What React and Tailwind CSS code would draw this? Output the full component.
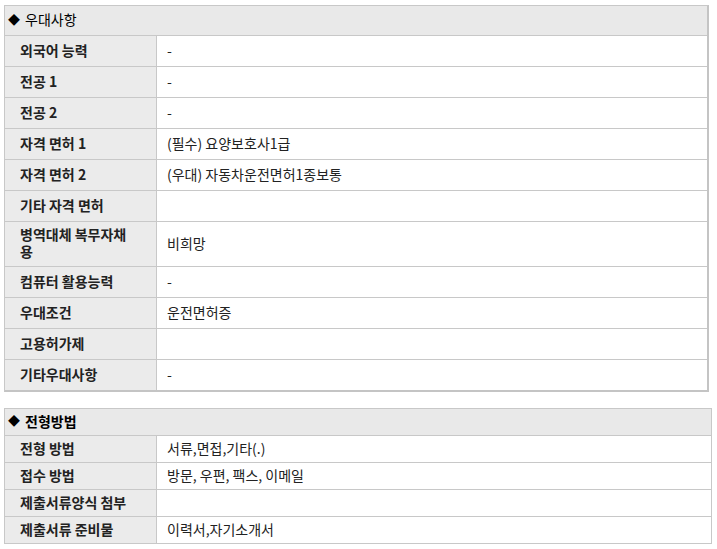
import React from 'react';

// --- 데이터 ---
const preferRows = [
  { label: '외국어 능력', value: '-' },
  { label: '전공 1', value: '-' },
  { label: '전공 2', value: '-' },
  { label: '자격 면허 1', value: '(필수) 요양보호사1급' },
  { label: '자격 면허 2', value: '(우대) 자동차운전면허1종보통' },
  { label: '기타 자격 면허', value: '' },
  { label: '병역대체 복무자채용', value: '비희망', tall: true },
  { label: '컴퓨터 활용능력', value: '-' },
  { label: '우대조건', value: '운전면허증' },
  { label: '고용허가제', value: '' },
  { label: '기타우대사항', value: '-' },
];

const selectRows = [
  { label: '전형 방법', value: '서류,면접,기타(.)' },
  { label: '접수 방법', value: '방문, 우편, 팩스, 이메일' },
  { label: '제출서류양식 첨부', value: '' },
  { label: '제출서류 준비물', value: '이력서,자기소개서' },
];

function Row({ label, value, tall, h }) {
  return (
    <div className={`flex border-t border-[#c8c8c8] ${tall ? 'h-[45px]' : h}`}>
      <div className="w-[152px] shrink-0 bg-[#ebebeb] border-r border-[#c8c8c8] pl-[15px] pr-[24px] pb-[2px] flex items-center font-bold text-[#222] leading-[17px]">
        {label}
      </div>
      <div className="flex-1 pl-[10px] pb-[2px] flex items-center text-[#222]">{value}</div>
    </div>
  );
}

export default function App() {
  return (
    <div
      className="w-[717px] h-[549px] bg-white pl-[4px] pt-[5px] text-[14px]"
      style={{ fontFamily: '"Noto Sans CJK KR", "Noto Sans", sans-serif' }}
    >
      {/* === 우대사항 === */}
      <div className="w-[705px] border-l border-t border-[#c8c8c8] border-r-2 border-b-2 border-r-[#c4c4c4] border-b-[#c4c4c4]">
        <div className="h-[29px] bg-[#e9e9e9] flex items-center pl-[3px] pb-[2px] text-black">
          <span className="mr-[5px] text-[12px]">◆</span>우대사항
        </div>
        {preferRows.map((r) => (
          <Row key={r.label} {...r} h="h-[31px]" />
        ))}
      </div>

      {/* === 전형방법 === */}
      <div className="mt-[16px] w-[708px] border border-[#c8c8c8]">
        <div className="h-[26px] bg-[#e9e9e9] flex items-center pl-[3px] pb-[2px] font-bold text-black">
          <span className="mr-[5px] text-[12px]">◆</span>전형방법
        </div>
        {selectRows.map((r) => (
          <Row key={r.label} {...r} h="h-[27px]" />
        ))}
      </div>
    </div>
  );
}
